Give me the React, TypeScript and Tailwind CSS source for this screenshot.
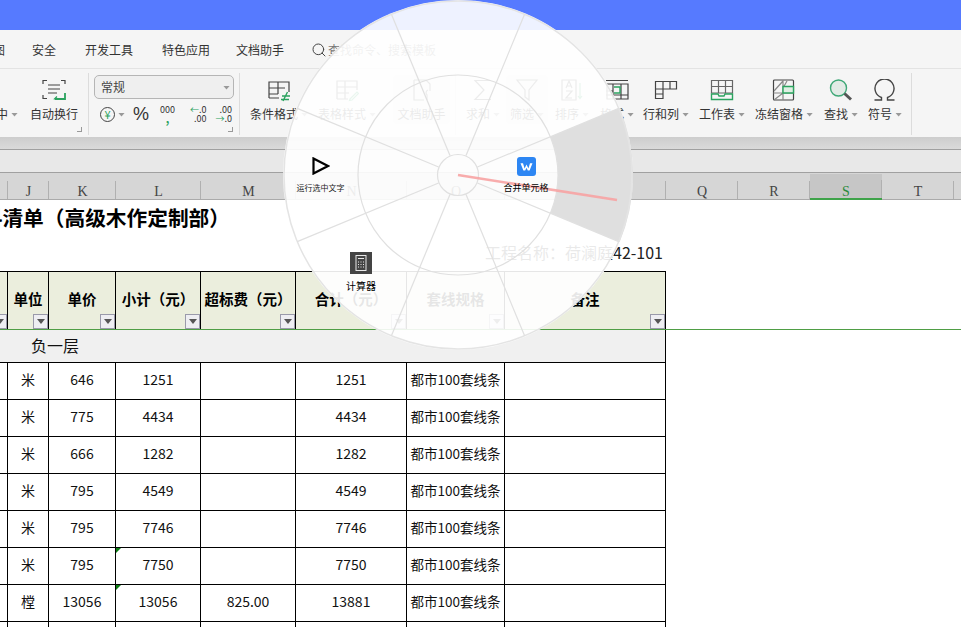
import React from 'react';
import { Search } from 'lucide-react';

const GRID = 'grid grid-cols-[8px_41px_67px_85px_95px_111px_98px_161px]';
const ink = '#444';
const green = '#2ba35f';

const Caret: React.FC = () => (
    <span className="ml-[3px] mt-[1px] w-[7px] h-[4px] bg-[#999] [clip-path:polygon(0_0,100%_0,50%_100%)]" />
);

const RibbonBtn: React.FC<{
    label: string;
    caret?: boolean;
    icon: React.ReactNode;
    className?: string;
}> = ({ label, caret = true, icon, className = '' }) => (
    <div className={`flex flex-col items-center pt-[9px] ${className}`}>
        <div className="h-[24px] flex items-center justify-center">{icon}</div>
        <div className="mt-[4px] h-[16px] flex items-center text-[12px] leading-[16px] text-[#333] whitespace-nowrap">
            {label}
            {caret && <Caret />}
        </div>
    </div>
);

const Sep: React.FC = () => <div className="w-px h-[62px] mt-[4px] bg-[#dcdcdc] shrink-0" />;

const Corner: React.FC = () => (
    <div className="absolute right-[6px] bottom-[5px] w-[5px] h-[5px] border-r border-b border-[#999]" />
);

const Icon: React.FC<{ w?: number; h?: number; children: React.ReactNode }> = ({ w = 24, h = 24, children }) => (
    <svg width={w} height={h} viewBox={`0 0 ${w} ${h}`} fill="none" stroke={ink} strokeWidth="1.2">
        {children}
    </svg>
);

const FilterBtn: React.FC = () => (
    <div className="absolute right-0 bottom-0 w-[15px] h-[15px] bg-[#eeeef2] border border-[#9a9aaa] flex items-center justify-center">
        <span className="w-0 h-0 border-l-[4px] border-r-[4px] border-t-[5px] border-l-transparent border-r-transparent border-t-[#555]" />
    </div>
);

const GreenMark: React.FC = () => (
    <span className="absolute left-0 top-0 w-0 h-0 border-t-[5px] border-r-[5px] border-t-[#0b7d12] border-r-transparent" />
);

const Col: React.FC<{ name?: string; selected?: boolean }> = ({ name = '', selected }) => (
    <div className={`relative h-[26px] flex items-center justify-center pt-[11px] leading-none text-[14px] font-['Liberation_Serif',serif] ${selected ? 'bg-[#c6c6c6] text-[#2c8a3c] border-b-2 border-[#3fa34a] mt-[1px] h-[25px]' : 'text-[#444]'}`}>
        {name}
        <span className="absolute right-0 bottom-0 h-[18px] w-px bg-[#b0b0b0]" />
    </div>
);

const HeadCell: React.FC<{ children?: React.ReactNode }> = ({ children }) => (
    <div className="relative border-r border-black bg-[#ebeedd] flex items-center justify-center text-[14.5px] font-bold text-black whitespace-nowrap pb-[3px]">
        {children}
        <FilterBtn />
    </div>
);

const rows = [
    { unit: '米', price: '646', sub: '1251', extra: '', total: '1251' },
    { unit: '米', price: '775', sub: '4434', extra: '', total: '4434' },
    { unit: '米', price: '666', sub: '1282', extra: '', total: '1282' },
    { unit: '米', price: '795', sub: '4549', extra: '', total: '4549' },
    { unit: '米', price: '795', sub: '7746', extra: '', total: '7746' },
    { unit: '米', price: '795', sub: '7750', extra: '', total: '7750', mark: true },
    { unit: '樘', price: '13056', sub: '13056', extra: '825.00', total: '13881', mark: true },
    { unit: '', price: '', sub: '', extra: '', total: '' },
];

const Cell: React.FC<{ children?: React.ReactNode }> = ({ children }) => (
    <div className="relative border-r border-b border-black flex items-center justify-center pb-[3px] text-[14px] text-[#111] whitespace-nowrap">
        {children}
    </div>
);

const spokeAngles = [22.5, 67.5, 112.5, 157.5, 202.5, 247.5, 292.5, 337.5];

const Wheel: React.FC = () => (
    <div className="absolute left-[283px] top-0 w-[350px] h-[350px] rounded-full bg-white/90">
        <svg width="350" height="350" viewBox="-175 -175 350 350" className="absolute inset-0" fill="none">
            <path d="M92.4 -38.3L161.7 -67A175 175 0 0 1 161.7 67L92.4 38.3A100 100 0 0 0 92.4 -38.3Z" fill="#dfdfdf" />
            <circle r="174" stroke="#e4e4e4" strokeWidth="1.5" />
            <circle r="100" stroke="#e0e0e0" strokeWidth="1.2" />
            <circle r="20.5" stroke="#e0e0e0" strokeWidth="1.2" />
            {spokeAngles.map((a) => {
                const r = (a * Math.PI) / 180;
                return (
                    <line
                        key={a}
                        x1={21 * Math.cos(r)}
                        y1={21 * Math.sin(r)}
                        x2={174 * Math.cos(r)}
                        y2={174 * Math.sin(r)}
                        stroke="#e0e0e0"
                        strokeWidth="1.2"
                    />
                );
            })}
            <line x1="0" y1="0" x2="159" y2="25" stroke="#f7a3a3" strokeWidth="2.5" opacity="0.9" />
        </svg>

        <div className="absolute left-[14px] top-[157px] w-[47px] flex flex-col items-center">
            <svg width="18" height="18" viewBox="0 0 18 18" fill="none" stroke="#000" strokeWidth="2.2">
                <path d="M1.5 1.5L16 9L1.5 16.5Z" />
            </svg>
            <span className="mt-[8px] text-[8px] leading-[10px] text-[#222] whitespace-nowrap">运行选中文字</span>
        </div>

        <div className="absolute left-[208px] top-[157px] w-[70px] flex flex-col items-center">
            <svg width="19" height="19" viewBox="0 0 19 19" fill="none">
                <rect width="19" height="19" rx="3" fill="#2d86f3" />
                <path d="M3.5 6.2H6L7.6 11.5L9.5 7.5L11.4 11.5L13 6.2H15.5L12.6 13.6H10.8L9.5 10.8L8.2 13.6H6.4Z" fill="#fff" />
            </svg>
            <span className="mt-[6px] text-[9px] leading-[12px] text-black whitespace-nowrap">合并单元格</span>
        </div>

        <div className="absolute left-[51px] top-[252px] w-[54px] flex flex-col items-center">
            <div className="w-[22px] h-[22px] bg-[#444] flex items-center justify-center">
                <svg width="12" height="16" viewBox="0 0 12 16" fill="none" stroke="#e8e8e8" strokeWidth="1">
                    <rect x="1" y="0.5" width="10" height="15" />
                    <path d="M3 3.5H9" />
                    <path d="M3 7h1M5.5 7h1M8 7h1M3 9.5h1M5.5 9.5h1M8 9.5h1M3 12h1M5.5 12h1M8 12h1" />
                </svg>
            </div>
            <span className="mt-[5px] text-[10px] leading-[13px] text-black whitespace-nowrap">计算器</span>
        </div>
    </div>
);

export default function App() {
    return (
        <div className="relative w-[961px] h-[627px] overflow-hidden bg-white font-['Noto_Sans_CJK_SC',sans-serif]">
            <div className="h-[30px] bg-[#567aff]" />

            {/* menu tabs */}
            <div className="h-[39px] bg-[#f5f5f5] border-b border-[#e3e3e3] flex items-center pt-[1px] text-[12px] text-[#333] overflow-hidden whitespace-nowrap">
                <span className="ml-[-7px]">图</span>
                <span className="ml-[27px]">安全</span>
                <span className="ml-[29px]">开发工具</span>
                <span className="ml-[29px]">特色应用</span>
                <span className="ml-[26px]">文档助手</span>
                <Search size={16} strokeWidth={1.5} className="ml-[27px] text-[#444]" />
                <span className="ml-px text-[#777]">查找命令、搜索模板</span>
            </div>

            {/* ribbon */}
            <div className="h-[68px] bg-[#f5f5f5] flex overflow-hidden">
                <div className="relative w-[88px] shrink-0 flex">
                    <div className="ml-[-4px] mt-[37px] h-[16px] flex items-center text-[12px] text-[#333]">
                        中<Caret />
                    </div>
                    <RibbonBtn
                        label="自动换行"
                        caret={false}
                        className="ml-[12px]"
                        icon={
                            <Icon h={22}>
                                <path d="M1 5V1.5H5M19 1.5H23V5M1 16V19.5H5" />
                                <path d="M6 6H18M6 10H18M6 14H15" />
                                <path d="M23 14V20H13" stroke={green} strokeWidth="1.8" />
                                <path d="M15 17.5L12.5 20L15 20.5" stroke={green} strokeWidth="1.2" />
                            </Icon>
                        }
                    />
                    <Corner />
                </div>
                <Sep />
                <div className="relative w-[150px] shrink-0 pl-[5px] pt-[6px]">
                    <div className="w-[140px] h-[24px] rounded-[5px] border border-[#b5b5b5] bg-[#efefef] flex items-center justify-between pl-[6px] pr-[3px] text-[12px] text-[#444]">
                        常规
                        <Caret />
                    </div>
                    <div className="mt-[5px] flex items-center text-[#333]">
                        <div className="ml-[6px] w-[15px] h-[15px] rounded-full border border-[#444] flex items-center justify-center text-[11px] leading-none text-[#2ba35f]">
                            ¥
                        </div>
                        <Caret />
                        <span className="ml-[8px] text-[18px] leading-[20px] font-normal font-['Liberation_Sans',sans-serif]">%</span>
                        <div className="ml-[11px] flex flex-col items-center text-[9px] leading-[9px]">
                            <span>000</span>
                            <span className="text-[#2ba35f] text-[11px] font-bold">,</span>
                        </div>
                        <div className="ml-[15px] flex flex-col items-end text-[9px] leading-[9px]">
                            <span><span className="text-[#2ba35f]">←</span>.0</span>
                            <span>.00</span>
                        </div>
                        <div className="ml-[9px] flex flex-col items-end text-[9px] leading-[9px]">
                            <span>.00</span>
                            <span><span className="text-[#2ba35f]">→</span>.0</span>
                        </div>
                    </div>
                    <Corner />
                </div>
                <Sep />
                <div className="w-[215px] shrink-0 flex">
                    <RibbonBtn
                        label="条件格式"
                        className="ml-[10px]"
                        icon={
                            <Icon>
                                <path d="M2 20V4H22V14M2 10H18M11 4V16M2 16H11M2 20H12" />
                                <path d="M15 18H23M14 21.5H22M20.5 14L16 23" stroke={green} strokeWidth="1.4" />
                            </Icon>
                        }
                    />
                    <RibbonBtn
                        label="表格样式"
                        className="ml-[10px]"
                        icon={
                            <Icon>
                                <path d="M2 21V3H22V12M2 9H22M2 15H14M10 3V21M2 21H13" />
                                <path d="M15 21L22 14L23.5 15.5L17 22L14.5 22.5Z" stroke={green} />
                            </Icon>
                        }
                    />
                    <div className="ml-[17px] w-[57px] h-[49px] mt-[6px] rounded-[4px] bg-[#e8e8e8]">
                        <RibbonBtn
                            label="文档助手"
                            caret={false}
                            className="-mt-[6px]"
                            icon={
                                <Icon>
                                    <path d="M4 2H16L20 6V13M4 2V22H14" />
                                    <path d="M18 12a3 3 0 0 0-1 5v5" />
                                </Icon>
                            }
                        />
                    </div>
                </div>
                <Sep />
                <div className="flex shrink-0">
                    <RibbonBtn
                        label="求和"
                        className="ml-[10px]"
                        icon={
                            <Icon w={20} h={22}>
                                <path d="M18 1.5H2L11 11L2 20.5H18" />
                            </Icon>
                        }
                    />
                    <div className="ml-[6px] w-[42px] h-[49px] mt-[6px] rounded-[4px] bg-[#e8e8e8] flex justify-center">
                        <RibbonBtn
                            label="筛选"
                            className="-mt-[6px]"
                            icon={
                                <Icon>
                                    <path d="M2 2H22L14 12V22L10 19V12Z" />
                                </Icon>
                            }
                        />
                    </div>
                    <RibbonBtn
                        label="排序"
                        className="ml-[7px]"
                        icon={
                            <Icon>
                                <path d="M2 2H16V22H2Z" />
                                <path d="M20 5V20M18 18L20 20.5L22 18" stroke={green} />
                                <path d="M6 10L9 3L12 10M7 8H11M6 13H12L6 20H12" />
                            </Icon>
                        }
                    />
                    <RibbonBtn
                        label="格式"
                        className="ml-[11px]"
                        icon={
                            <Icon h={22}>
                                <path d="M1 1.5H23M1 5H23V20H2V5M1 12H8M1 16H23M8 5V20M16 5V20" />
                                <path d="M9 8H15V14H9" stroke={green} strokeWidth="1.4" />
                            </Icon>
                        }
                    />
                    <RibbonBtn
                        label="行和列"
                        className="ml-[9px]"
                        icon={
                            <Icon h={20}>
                                <path d="M1.5 18.5V1.5H22.5V9H9V18.5ZM9 1.5V9M1.5 9H9M16 1.5V9M1.5 14H9" />
                            </Icon>
                        }
                    />
                    <RibbonBtn
                        label="工作表"
                        className="ml-[10px]"
                        icon={
                            <Icon h={22}>
                                <path d="M1.5 14V1.5H22.5V14ZM1.5 7.5H22.5M8.5 1.5V14M15.5 1.5V14" stroke="#666" />
                                <path d="M1.5 15V20.5H22.5V15H15L14 17H9L8 15Z" stroke={green} strokeWidth="1.4" />
                            </Icon>
                        }
                    />
                    <RibbonBtn
                        label="冻结窗格"
                        className="ml-[10px]"
                        icon={
                            <Icon h={22}>
                                <rect x="1.5" y="1" width="20" height="20" rx="1" />
                                <path d="M1.5 14H21.5M11 1V21M2 12L11 2M2 21L11 14M11 9L15 2" stroke="#888" />
                                <path d="M11 7.5H21.5V14H11Z" stroke={green} fill="#dfeee3" strokeWidth="1.4" />
                            </Icon>
                        }
                    />
                    <RibbonBtn
                        label="查找"
                        className="ml-[11px]"
                        icon={
                            <Icon h={22}>
                                <circle cx="9.5" cy="9" r="8" stroke="#3fa877" fill="#e2ebe6" strokeWidth="1.4" />
                                <path d="M15.5 14.5L22 20.5" stroke="#555" strokeWidth="3" />
                            </Icon>
                        }
                    />
                    <RibbonBtn
                        label="符号"
                        className="ml-[10px]"
                        icon={
                            <Icon h={22}>
                                <path d="M1.5 21H8.5V18.5A9.5 9.5 0 1 1 14.5 18.5V21H21.5" strokeWidth="1.4" />
                            </Icon>
                        }
                    />
                    <div className="ml-[9px]">
                        <Sep />
                    </div>
                </div>
            </div>

            <div className="h-[13px] bg-gradient-to-b from-[#cdcdcd] to-[#dadada] border-b border-[#a0a0a0]" />
            <div className="h-[23px] bg-[#e8e8e8] border-b border-[#a0a0a0]" />

            {/* column letters */}
            <div className="h-[27px] bg-[#d6d6d6] border-b border-[#aaa] grid grid-cols-[8px_41px_67px_85px_95px_111px_98px_161px_72px_72px_72px_72px_8px]">
                <Col />
                <Col name="J" />
                <Col name="K" />
                <Col name="L" />
                <Col name="M" />
                <Col name="N" />
                <Col name="O" />
                <Col name="P" />
                <Col name="Q" />
                <Col name="R" />
                <Col name="S" selected />
                <Col name="T" />
                <Col />
            </div>

            {/* sheet title block */}
            <div className="h-[71px] w-[666px] flex flex-col">
                <div className="w-[230px] h-[36px] flex justify-end items-center text-[20.7px] font-bold text-black whitespace-nowrap">
                    料清单（高级木作定制部）
                </div>
                <div className="mt-[4px] pr-[3px] flex justify-end text-[16px] leading-[24px] text-[#222] whitespace-nowrap">
                    工程名称：荷澜庭42-101
                </div>
            </div>

            {/* table head, its green rule runs to the page edge */}
            <div className="h-[59px] border-b border-[#4f9e45]">
                <div className={`${GRID} w-[666px] h-full border-t border-black`}>
                    <HeadCell />
                    <HeadCell>单位</HeadCell>
                    <HeadCell>单价</HeadCell>
                    <HeadCell>小计（元）</HeadCell>
                    <HeadCell>超标费（元）</HeadCell>
                    <HeadCell>合计（元）</HeadCell>
                    <HeadCell>套线规格</HeadCell>
                    <HeadCell>备注</HeadCell>
                </div>
            </div>

            <div className="w-[666px] h-[33px] bg-[#f0f0f0] border-r border-b border-black flex items-center pl-[31px] pb-[2px] text-[16px] text-[#111]">
                负一层
            </div>

            {rows.map((r, i) => (
                <div key={i} className={`${GRID} w-[666px] h-[37px]`}>
                    <Cell />
                    <Cell>{r.unit}</Cell>
                    <Cell>{r.price}</Cell>
                    <Cell>
                        {r.mark && <GreenMark />}
                        {r.sub}
                    </Cell>
                    <Cell>{r.extra}</Cell>
                    <Cell>{r.total}</Cell>
                    <Cell>{r.total && <span className="text-[13.5px]">都市100套线条</span>}</Cell>
                    <Cell />
                </div>
            ))}

            <Wheel />
        </div>
    );
}
